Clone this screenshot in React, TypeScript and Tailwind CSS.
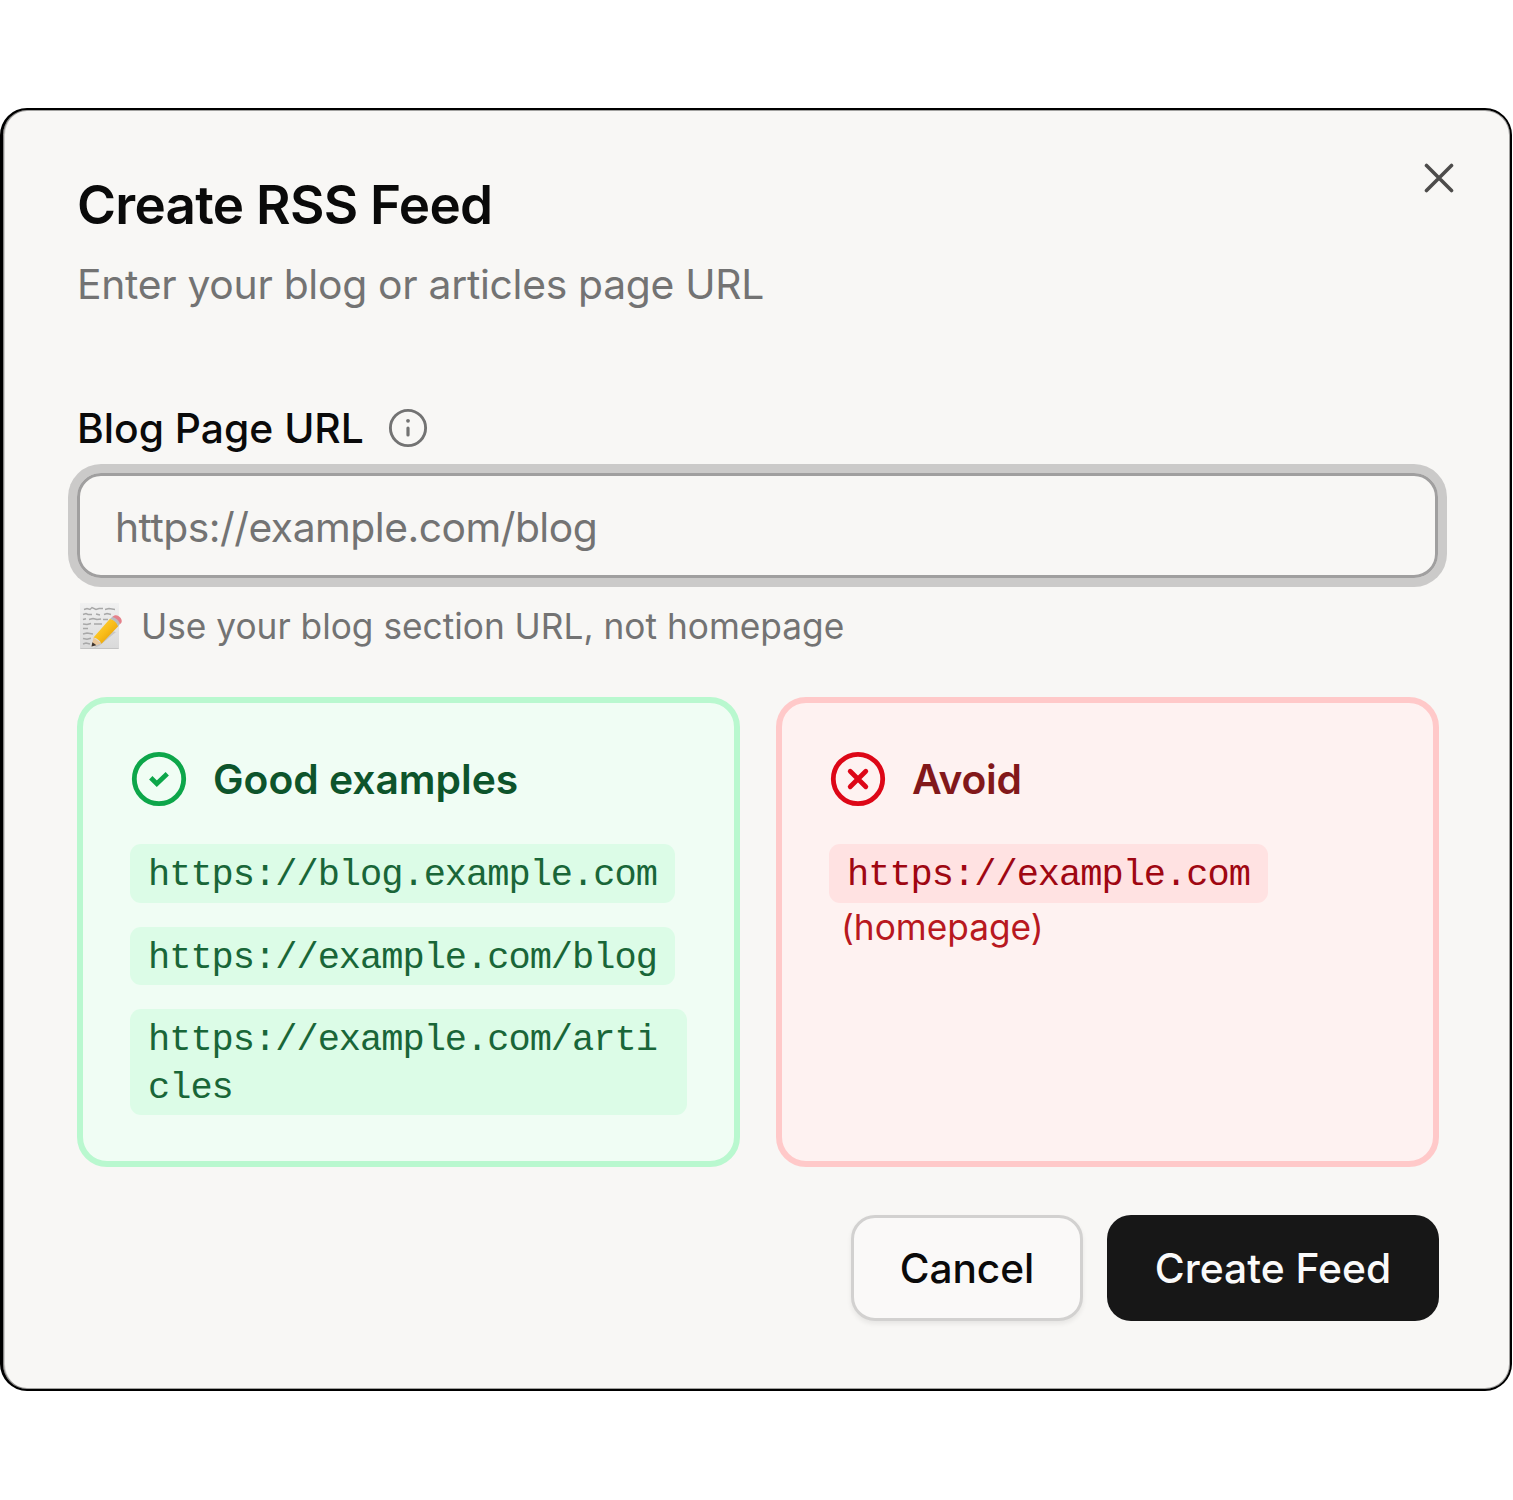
import React from "react";

function CloseIcon() {
  return (
    <svg width="30" height="30" viewBox="0 0 30 30" fill="none" stroke="#4d4c4b" strokeWidth="3.6" strokeLinecap="round">
      <path d="M2.5 2.5 27.5 27.5M27.5 2.5 2.5 27.5" />
    </svg>
  );
}

function InfoIcon() {
  return (
    <svg width="40" height="40" viewBox="0 0 40 40" fill="none" stroke="#737373" strokeLinecap="round">
      <circle cx="20" cy="20" r="17.6" strokeWidth="2.9" />
      <path d="M20 20v7" strokeWidth="3.2" />
      <path d="M20 12.8v.01" strokeWidth="3.8" />
    </svg>
  );
}

function MemoIcon() {
  return (
    <svg width="46" height="50" viewBox="0 0 46 50" fill="none">
      <defs>
        <linearGradient id="sheet" x1="0" y1="0" x2="0" y2="1">
          <stop offset="0" stopColor="#f1f1f1" />
          <stop offset="1" stopColor="#d9d9d9" />
        </linearGradient>
        <linearGradient id="barrel" x1="0" y1="0" x2="1" y2="1">
          <stop offset="0" stopColor="#ffd84a" />
          <stop offset="0.5" stopColor="#f9bd18" />
          <stop offset="1" stopColor="#d98e08" />
        </linearGradient>
      </defs>
      <rect x="3" y="2" width="39" height="46" fill="url(#sheet)" />
      <path d="M3.5 47.5h38" stroke="#c4c4c4" />
      <g stroke="#a8a8a8" strokeWidth="1.4">
        <path d="M7 8.500l3-1 3 1 2-2 4 2 3-1h4M28 8.500l4-1 6 1" />
        <path d="M6 13.500l3-1 2 1h4M19 13l4 1M27 13.500l3-1 4 1" />
        <path d="M6 18.500l3-.8M12 18.500l4-1 4 1 4-.5M26 18.500h5" />
        <path d="M6 23l4 .5 4-1M17 23h8" />
        <path d="M6 27.500h5M6 33l4-1 6 1M6 37.500l4 .8 4-1M6 43l3-1 4 1" />
      </g>
      <path d="M17 47l17-17 5 1-17 14z" fill="#8a8a8a" opacity="0.3" />
      <path d="M14.500 45.500l2-9 8 6z" fill="#eac79a" />
      <path d="M14.500 45.500l.9-4.200 4 2.900z" fill="#3c3430" />
      <path d="M16.500 36.500L33 17.800c4 .8 7.400 3.800 8.200 7.400L24.500 42.800c-1.500-3.200-4.500-5.500-8-6.300z" fill="url(#barrel)" />
      <path d="M33 18l2.600-2.600c4 .8 7 3.800 7.800 7.200L41 25.400c-1-3.700-4.100-6.500-8-7.400z" fill="#b9bcc0" />
      <path d="M35.500 16c1.500-2 4-2.200 6.200-.8 2.800 1.800 4 5 2.300 7l-1 .8c-1.200-3.400-4-6.100-7.500-7z" fill="#e5808a" />
    </svg>
  );
}

function CheckCircle() {
  return (
    <svg width="56" height="56" viewBox="0 0 56 56" fill="none" stroke="#0da64a" strokeWidth="4.800" strokeLinecap="square">
      <circle cx="28" cy="28" r="24.700" />
      <path d="M21.500 28.500l4.300 4.200L34.500 24.500" />
    </svg>
  );
}

function CrossCircle() {
  return (
    <svg width="56" height="56" viewBox="0 0 56 56" fill="none" stroke="#dd0717" strokeWidth="4.800" strokeLinecap="round">
      <circle cx="28" cy="28" r="24.700" />
      <path d="M20.200 20.200l15.600 15.600M35.800 20.200L20.200 35.800" />
    </svg>
  );
}

const mono = "font-['Liberation_Mono',monospace] text-[37px] tracking-[-1px] leading-[47.500px] rounded-[11px] pl-[18px] pr-[18px] pt-[8px] pb-[3px] break-all w-fit";

function GoodUrl({ children }: { children: string }) {
  return <code className={`${mono} bg-[#dcfce7] text-[#196638]`}>{children}</code>;
}

export default function App() {
  return (
    <main className="flex h-[1500px] w-[1513px] flex-col bg-white pt-[108px] font-['Inter',sans-serif]">
      <section className="flex h-[1283px] w-[1512px] flex-col rounded-[27px] border-2 border-l-[3px] border-black bg-[#f8f7f5] pr-[71px] pl-[75px] shadow-[inset_0_0_0_1px_rgba(0,0,0,0.35),inset_2px_0_0_#cfcecc]">
        <header className="flex justify-between">
          <div className="ml-[-1px] flex flex-col items-start">
            <h1 className="mt-[62px] h-[66px] text-[53px] leading-[66px] font-semibold tracking-[-0.72px] whitespace-nowrap text-[#0a0a0a]">Create RSS Feed</h1>
            <p className="mt-[17px] h-[60px] text-[40.800px] leading-[59px] tracking-[-0.28px] whitespace-nowrap text-[#737373]">Enter your blog or articles page URL</p>
          </div>
          <button aria-label="Close" className="mt-[53px] mr-[-15px] h-[30px] w-[30px]">
            <CloseIcon />
          </button>
        </header>

        <div className="mt-[83px] ml-[-1px] flex h-[60px] items-center">
          <label htmlFor="url" className="text-[40.800px] leading-[60px] font-medium whitespace-nowrap text-[#0a0a0a]">Blog Page URL</label>
          <span className="ml-[24px]"><InfoIcon /></span>
        </div>
        <input
          id="url"
          placeholder="https://example.com/blog"
          className="mt-[15px] ml-[-1px] h-[105px] w-[1361px] shrink-0 rounded-[24px] border-[3px] border-[#a09f9f] bg-transparent px-[35px] pt-[2px] text-[40.800px] tracking-[-0.5px] text-[#0a0a0a] ring-[9px] ring-[#cbcac9] outline-none placeholder:text-[#737373]"
        />
        <div className="mt-[23px] ml-[-1px] flex h-[50px] items-center">
          <MemoIcon />
          <p className="mt-[2px] ml-[18px] text-[35.250px] leading-[50px] whitespace-nowrap text-[#737373]">Use your blog section URL, not homepage</p>
        </div>

        <div className="mt-[46px] ml-[-1px] flex h-[470px] w-[1362px] shrink-0 gap-[36px]">
          <div className="flex w-[663px] flex-col rounded-[30px] border-[6px] border-[#b9f8cf] bg-[#f0fdf4] px-[47px] pt-[48px]">
            <div className="flex h-[56px] items-center pl-px">
              <CheckCircle />
              <h2 className="ml-[26px] text-[40.800px] leading-[56px] font-semibold whitespace-nowrap text-[#0d542b]">Good examples</h2>
            </div>
            <div className="mt-[37px] flex flex-col items-start gap-[24px]">
              <GoodUrl>https://blog.example.com</GoodUrl>
              <GoodUrl>https://example.com/blog</GoodUrl>
              <GoodUrl>https://example.com/articles</GoodUrl>
            </div>
          </div>
          <div className="flex w-[663px] flex-col rounded-[30px] border-[6px] border-[#ffc9c9] bg-[#fef2f1] px-[47px] pt-[48px]">
            <div className="flex h-[56px] items-center pl-px">
              <CrossCircle />
              <h2 className="ml-[26px] text-[40.800px] leading-[56px] font-semibold tracking-[-0.3px] whitespace-nowrap text-[#82181a]">Avoid</h2>
            </div>
            <div className="mt-[37px] flex flex-col items-start">
              <code className={`${mono} bg-[#ffe2e2] text-[#9f0712]`}>https://example.com</code>
              <span className="ml-[12px] text-[35.250px] leading-[50px] text-[#b81820]">(homepage)</span>
            </div>
          </div>
        </div>

        <footer className="mt-[48px] flex h-[106px] shrink-0 justify-end gap-[24px]">
          <button className="h-[106px] w-[232px] rounded-[24px] border-[3px] border-[#d2d1d0] bg-[#faf9f8] pt-[2px] text-[40.600px] font-medium whitespace-nowrap text-[#0a0a0a] shadow-[0_3px_5px_rgba(0,0,0,0.07)]">Cancel</button>
          <button className="h-[106px] w-[332px] rounded-[24px] bg-[#171717] pt-[2px] text-[40.800px] font-medium whitespace-nowrap text-[#fafafa]">Create Feed</button>
        </footer>
      </section>
    </main>
  );
}
